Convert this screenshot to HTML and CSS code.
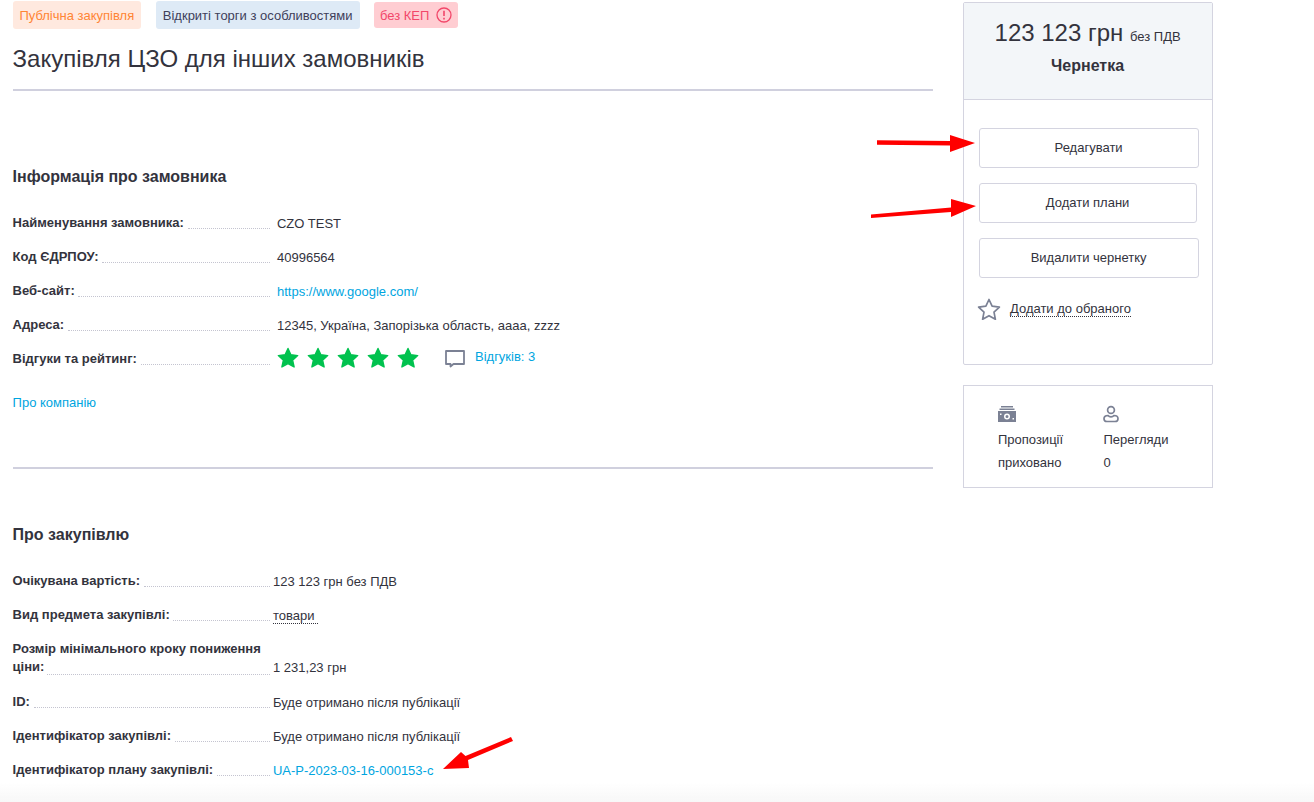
FILE: index.html
```html
<!DOCTYPE html>
<html lang="uk">
<head>
<meta charset="utf-8">
<title>Закупівля ЦЗО для інших замовників</title>
<link rel="stylesheet" href="styles.css">
</head>
<body>
<div class="page">
  <main class="main">
    <div class="tags">
      <span class="tag tag-orange">Публічна закупівля</span>
      <span class="tag tag-blue">Відкриті торги з особливостями</span>
      <span class="tag tag-red">без КЕП
        <svg class="tag-icon" viewBox="0 0 16 16" width="16" height="16"><circle cx="8" cy="8" r="7" fill="none" stroke="currentColor" stroke-width="1.3"/><path d="M8 3.800v5.200M8 10.800v1.600" fill="none" stroke="currentColor" stroke-width="1.600"/></svg>
      </span>
    </div>
    <h1 class="title">Закупівля ЦЗО для інших замовників</h1>
    <hr class="rule">

    <section class="section section-customer">
      <h2 class="heading">Інформація про замовника</h2>
      <div class="rows rows-wide">
        <div class="row"><div class="label"><span>Найменування замовника:</span><i class="dots"></i></div><div class="value">CZO TEST</div></div>
        <div class="row"><div class="label"><span>Код ЄДРПОУ:</span><i class="dots"></i></div><div class="value">40996564</div></div>
        <div class="row"><div class="label"><span>Веб-сайт:</span><i class="dots"></i></div><div class="value"><a class="link" href="#">https://www.google.com/</a></div></div>
        <div class="row"><div class="label"><span>Адреса:</span><i class="dots"></i></div><div class="value">12345, Україна, Запорізька область, аааа, zzzz</div></div>
        <div class="row row-rating"><div class="label"><span>Відгуки та рейтинг:</span><i class="dots"></i></div>
          <div class="value rating">
            <svg class="stars" width="150" height="22" viewBox="0 0 150 22" fill="#00c24e" stroke="#00c24e" stroke-width="1.400" stroke-linejoin="round"><path d="M11 1.500l2.900 6.300 6.800.8-5.100 4.600 1.500 6.800L11 16.600l-6.100 3.400 1.500-6.800L1.300 8.600l6.800-.8z"/><path transform="translate(30)" d="M11 1.500l2.900 6.300 6.800.8-5.100 4.600 1.500 6.800L11 16.600l-6.100 3.400 1.500-6.800L1.300 8.600l6.800-.8z"/><path transform="translate(60)" d="M11 1.500l2.900 6.300 6.800.8-5.100 4.600 1.500 6.800L11 16.600l-6.100 3.400 1.500-6.800L1.300 8.600l6.800-.8z"/><path transform="translate(90)" d="M11 1.500l2.900 6.300 6.800.8-5.100 4.600 1.500 6.800L11 16.600l-6.100 3.400 1.500-6.800L1.300 8.600l6.800-.8z"/><path transform="translate(120)" d="M11 1.500l2.900 6.300 6.800.8-5.100 4.600 1.500 6.800L11 16.600l-6.100 3.400 1.500-6.800L1.300 8.600l6.800-.8z"/></svg>
            <svg class="comment" width="22" height="20" viewBox="0 0 22 20" fill="none" stroke="#7b8194" stroke-width="1.800"><path d="M2 2h18v13H9.500l-3 2.500V15H2z" stroke-linejoin="round"/></svg>
            <a class="link" href="#">Відгуків: 3</a>
          </div>
        </div>
      </div>
      <a class="link about" href="#">Про компанію</a>
    </section>
    <hr class="rule">

    <section class="section section-purchase">
      <h2 class="heading">Про закупівлю</h2>
      <div class="rows rows-narrow">
        <div class="row"><div class="label"><span>Очікувана вартість:</span><i class="dots"></i></div><div class="value">123 123 грн без ПДВ</div></div>
        <div class="row"><div class="label"><span>Вид предмета закупівлі:</span><i class="dots"></i></div><div class="value"><span class="dotted">товари&nbsp;</span></div></div>
        <div class="row row-two"><div class="label"><span>Розмір мінімального кроку пониження ціни:</span><i class="dots"></i></div><div class="value">1 231,23 грн</div></div>
        <div class="row"><div class="label"><span>ID:</span><i class="dots"></i></div><div class="value">Буде отримано після публікації</div></div>
        <div class="row"><div class="label"><span>Ідентифікатор закупівлі:</span><i class="dots"></i></div><div class="value">Буде отримано після публікації</div></div>
        <div class="row"><div class="label"><span>Ідентифікатор плану закупівлі:</span><i class="dots"></i></div><div class="value"><a class="link" href="#">UA-P-2023-03-16-000153-c</a></div></div>
      </div>
    </section>
  </main>

  <aside class="side">
    <div class="card">
      <div class="card-head">
        <div class="price"><span class="amount">123 123 грн</span> <span class="vat">без ПДВ</span></div>
        <div class="status">Чернетка</div>
      </div>
      <div class="card-body">
        <button class="btn">Редагувати</button>
        <button class="btn btn-short">Додати плани</button>
        <button class="btn">Видалити чернетку</button>
        <div class="fav">
          <svg width="24" height="22" viewBox="0 0 24 22" fill="none" stroke="#7b8194" stroke-width="1.700" stroke-linejoin="round"><path d="M12 1.500l3.100 6.700 7.300.9-5.400 5 1.400 7.200-6.400-3.600-6.400 3.600 1.400-7.200-5.400-5 7.300-.9z"/></svg>
          <span class="dotted">Додати до обраного</span>
        </div>
      </div>
    </div>
    <div class="card stats">
      <div class="stat">
        <svg width="18" height="16" viewBox="0 0 18 16" fill="#7b8194"><path d="M3 0h12v1.400H3zM1.500 2.600h15V4h-15z"/><path fill-rule="evenodd" d="M0 5h18v11H0zM9 7.500a3 3 0 1 0 0 6 3 3 0 0 0 0-6zM9 9a1.500 1.500 0 1 1 0 3 1.500 1.500 0 0 1 0-3zM2 7.500v1.500h1.500V7.500zM14.500 12v1.500H16V12z"/></svg>
        <div class="stat-text">Пропозиції</div>
        <div class="stat-text">приховано</div>
      </div>
      <div class="stat">
        <svg width="16" height="18" viewBox="0 0 16 18" fill="none" stroke="#7b8194" stroke-width="1.700"><circle cx="8" cy="5" r="3.400"/><path d="M5 10.500c-2.500 0-4 1.300-4 3.200C1 15.500 2.200 16.500 4 16.500h8c1.800 0 3-1 3-2.800 0-1.900-1.500-3.200-4-3.200-.8 1-1.800 1.400-3 1.400s-2.200-.4-3-1.400z"/></svg>
        <div class="stat-text">Перегляди</div>
        <div class="stat-text">0</div>
      </div>
    </div>
  </aside>
</div>

<svg class="arrows" width="1314" height="802" viewBox="0 0 1314 802" fill="#ff0000">
  <path d="M877 140.300l73 .7V135l25 8-25 9v-6.500l-73-.7z"/>
  <path d="M871 214.500l80-7V199l25 7-25 11v-5l-80 6z"/>
  <path d="M511 737l2 4-45 19 1 8-26 1 18-17 4.500 4z"/>
</svg>
<div class="fade"></div>
</body>
</html>
```

FILE: styles.css
```css
* { box-sizing: border-box; }
html, body { margin: 0; padding: 0; }
body {
  background: #fff;
  color: #33333d;
  font-family: "Liberation Sans", Arial, sans-serif;
  font-size: 13px;
  height: 802px;
  overflow: hidden;
}
.page { display: flex; align-items: flex-start; padding-left: 12.600px; }
.main { width: 920px; }
.side { width: 250px; margin-left: 30px; padding-top: 2px; }

.tags { display: flex; align-items: center; height: 32px; }
.tag {
  display: flex;
  align-items: center;
  height: 28px;
  padding: 0 7px;
  border-radius: 3px;
  margin-right: 15px;
  white-space: nowrap;
}
.tag-orange { background: #ffe9df; color: #ff8534; margin-top: -2px; padding-left: 6.800px; padding-right: 6.600px; }
.tag-blue { background: #deeaf6; color: #40405a; margin-top: -2px; margin-right: 14px; }
.tag-red { background: #ffcdd2; color: #f2476a; height: 26px; padding: 0 6px 0 6.400px; margin-top: -2px; }
.tag-icon { margin-left: 6.600px; }

.title { margin: 9px 0 0; font-size: 24px; font-weight: 400; line-height: 36px; color: #33333d; }
.rule { margin: 12px 0 0; border: 0; height: 2px; background: #d0d0de; }
.section { padding-top: 76px; }
.section-purchase { padding-top: 56px; }
.section-customer + .rule { margin-top: 0; }
.section-customer { height: 376px; }
.heading { margin: 0; font-size: 16px; font-weight: 700; line-height: 20px; color: #33333d; }

.rows { margin-top: 26px; }
.row { display: flex; align-items: flex-end; margin-bottom: 14px; line-height: 20px; }
.rows-wide .label { width: 264.400px; }
.rows-narrow .label { width: 260.400px; }
.label { display: flex; align-items: flex-end; font-weight: 700; padding-right: 7px; }
.rows-narrow .label { padding-right: 3px; }
.row-two { margin-bottom: 15px; }
.row-two .label { display: block; position: relative; line-height: 18px; padding: 1px 3px 1px 0; }
.row-two .label span { display: block; width: 250px; }
.row-two .dots { position: absolute; left: 34px; right: 3px; bottom: 2px; margin: 0; }
.dots { flex: 1; min-width: 0; margin: 0 0 4px 3.600px; border-bottom: 1px dotted #c4c4d0; height: 1px; }
.value { color: #33333d; position: relative; top: 1px; }
.link { color: #00a5df; text-decoration: none; }
.dotted { border-bottom: 1px dotted #33333d; }
.rating { display: flex; align-items: center; top: -1px; height: 20px; }
.rating .link { position: relative; top: -1px; }
.comment { margin-left: 17px; margin-right: 9px; margin-top: 1px; }
.rows-wide .row:last-child { margin-bottom: 0; }
.about { display: block; margin-top: 24px; line-height: 20px; }

.card { border: 1px solid #d4d4e0; border-radius: 2px; background: #fff; }
.card-head {
  height: 97px;
  background: #f3f6f9;
  border-bottom: 1px solid #d4d4e0;
  text-align: center;
  padding-top: 12px;
}
.price { line-height: 36px; }
.amount { font-size: 24px; }
.vat { font-size: 13px; margin-left: 3px; }
.status { font-size: 16px; font-weight: 700; line-height: 24px; margin-top: -1px; }
.card-body { height: 264px; padding: 28px 13px 0 15px; }
.btn {
  display: block;
  width: 220px;
  height: 40px;
  margin: 0 0 15px;
  padding: 0 0 2px;
  background: #fff;
  border: 1px solid #d4d4e0;
  border-radius: 3px;
  color: #33333d;
  font: 13px "Liberation Sans", Arial, sans-serif;
}
.btn-short { width: 218px; }
.fav { display: flex; align-items: center; margin: 20px 0 0 -2px; }
.fav svg { margin-right: 9.400px; }
.stats {
  display: flex;
  margin-top: 20px;
  height: 103px;
  padding: 19px 34px 0 34.400px;
  border-radius: 0;
}
.stat { flex: none; width: 105.500px; }
.stat svg { display: block; height: 18px; }
.stat-text { line-height: 23px; }
.stat svg + .stat-text { margin-top: 5px; }

.arrows { position: absolute; left: 0; top: 0; pointer-events: none; }
.fade {
  position: fixed;
  left: 0;
  right: 0;
  bottom: 0;
  height: 20px;
  background: linear-gradient(to bottom, rgba(248,248,248,0), #f8f8f8);
  pointer-events: none;
}
```
